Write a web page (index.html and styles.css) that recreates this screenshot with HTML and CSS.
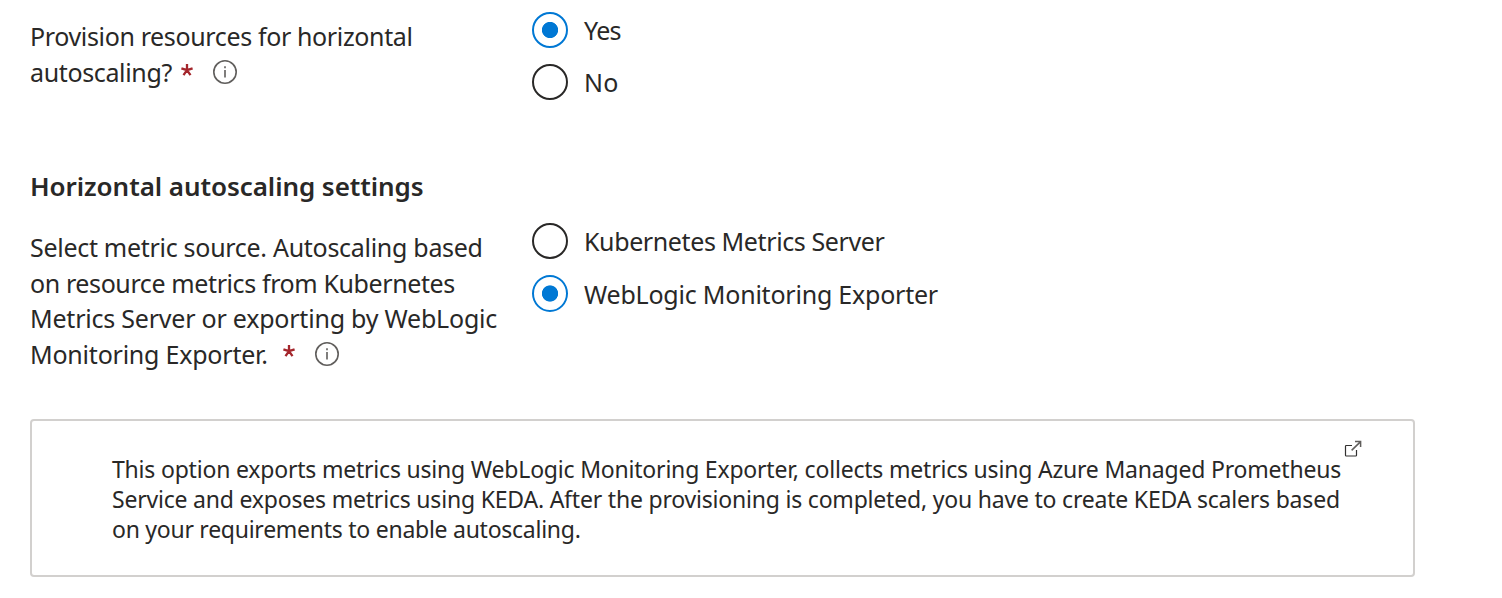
FILE: index.html
```html
<!DOCTYPE html>
<html lang="en">
<head>
<meta charset="utf-8">
<title>Horizontal autoscaling</title>
<link rel="stylesheet" href="styles.css">
</head>
<body>
<main class="page">
  <section class="field provision">
    <div class="label">
      <div class="line tight">Provision resources for horizontal</div>
      <div class="line"><span class="tight">autoscaling?</span><svg class="star" viewBox="0 0 12 12"><path d="M6 6.2V0M6 6.2L.4 4.3M6 6.2L11.6 4.3M6 6.2L2.5 11.2M6 6.2L9.5 11.2"/></svg><svg class="info" viewBox="0 0 24 24"><circle cx="12" cy="12" r="11.2"/><path d="M12 10V17.5M12 6.3V8.3"/></svg></div>
    </div>
    <div class="options">
      <label class="option"><span class="radio checked"></span><span class="yes">Yes</span></label>
      <label class="option"><span class="radio"></span><span class="no">No</span></label>
    </div>
  </section>
  <h2 class="heading">Horizontal autoscaling settings</h2>
  <section class="field metric">
    <div class="label">
      <div class="line medium">Select metric source. Autoscaling based</div>
      <div class="line tighter">on resource metrics from Kubernetes</div>
      <div class="line snug">Metrics Server or exporting by WebLogic</div>
      <div class="line"><span class="snug">Monitoring Exporter.</span><svg class="star wide" viewBox="0 0 12 12"><path d="M6 6.2V0M6 6.2L.4 4.3M6 6.2L11.6 4.3M6 6.2L2.5 11.2M6 6.2L9.5 11.2"/></svg><svg class="info" viewBox="0 0 24 24"><circle cx="12" cy="12" r="11.2"/><path d="M12 10V17.5M12 6.3V8.3"/></svg></div>
    </div>
    <div class="options">
      <label class="option"><span class="radio"></span><span class="tighter">Kubernetes Metrics Server</span></label>
      <label class="option"><span class="radio checked"></span><span class="snug">WebLogic Monitoring Exporter</span></label>
    </div>
  </section>
  <aside class="notice">
    <svg class="external" viewBox="0 0 18 18"><path d="M8 5.5H2.3Q1.5 5.5 1.5 6.3V15.2Q1.5 16 2.3 16H11.7Q12.5 16 12.5 15.2V10"/><path class="arrow" d="M7.6 10.4L16.6 1.6M11 1.5H16.6V7"/></svg>
    <div>This option exports metrics using WebLogic Monitoring Exporter, collects metrics using Azure Managed Prometheus</div>
    <div>Service and exposes metrics using KEDA. After the provisioning is completed, you have to create KEDA scalers based</div>
    <div class="medium">on your requirements to enable autoscaling.</div>
  </aside>
</main>
</body>
</html>
```
FILE: styles.css
```css
body { margin: 0; background: #fff; color: #292827; font-family: "Noto Sans", sans-serif; font-size: 25px; }
.page { padding: 0 0 0 30px; }
.field { display: flex; }
.provision { height: 160px; }
.metric { height: 208px; }
.label { width: 502px; padding-top: 18px; white-space: nowrap; }
.line { display: flex; align-items: center; height: 36px; }
.metric .line { height: 35.7px; }
.options { padding-top: 12px; }
.option { display: flex; align-items: center; height: 36px; gap: 16px; margin-bottom: 16px; white-space: nowrap; }
.radio { box-sizing: border-box; width: 36px; height: 36px; border: 2px solid #292827; border-radius: 50%; }
.checked { border-color: #0078d4; background: radial-gradient(circle, #0078d4 7.7px, transparent 8.5px); }
.metric .checked { height: 37px; }
.metric .option + .option { height: 37px; }
.star { width: 12px; height: 12px; fill: none; stroke: #a4262c; stroke-width: 2.3; margin: 0 20px 5px 9px; }
.wide { margin-left: 15px; }
.info { width: 24px; height: 24px; fill: none; stroke: #605e5c; stroke-width: 1.6; }
.tight { letter-spacing: -.36px; }
.tighter { letter-spacing: -.39px; }
.medium { letter-spacing: -.29px; }
.snug { letter-spacing: -.22px; }
.yes { letter-spacing: -.7px; }
.no { letter-spacing: .2px; }
.heading { margin: 0; height: 51px; line-height: 52px; font-size: 26px; font-weight: 600; letter-spacing: -.06px; }
.notice { position: relative; box-sizing: border-box; width: 1385px; height: 158px; border: 2px solid #d2d0ce; border-radius: 4px; padding: 33px 80px; font-size: 23px; line-height: 30px; letter-spacing: -.2px; white-space: nowrap; }
.notice .medium { letter-spacing: -.26px; }
.external { position: absolute; top: 19px; right: 51px; width: 18px; height: 18px; fill: none; stroke: #323130; stroke-width: 1.2; }
.arrow { stroke: #605e5c; stroke-width: 1.5; }
```
